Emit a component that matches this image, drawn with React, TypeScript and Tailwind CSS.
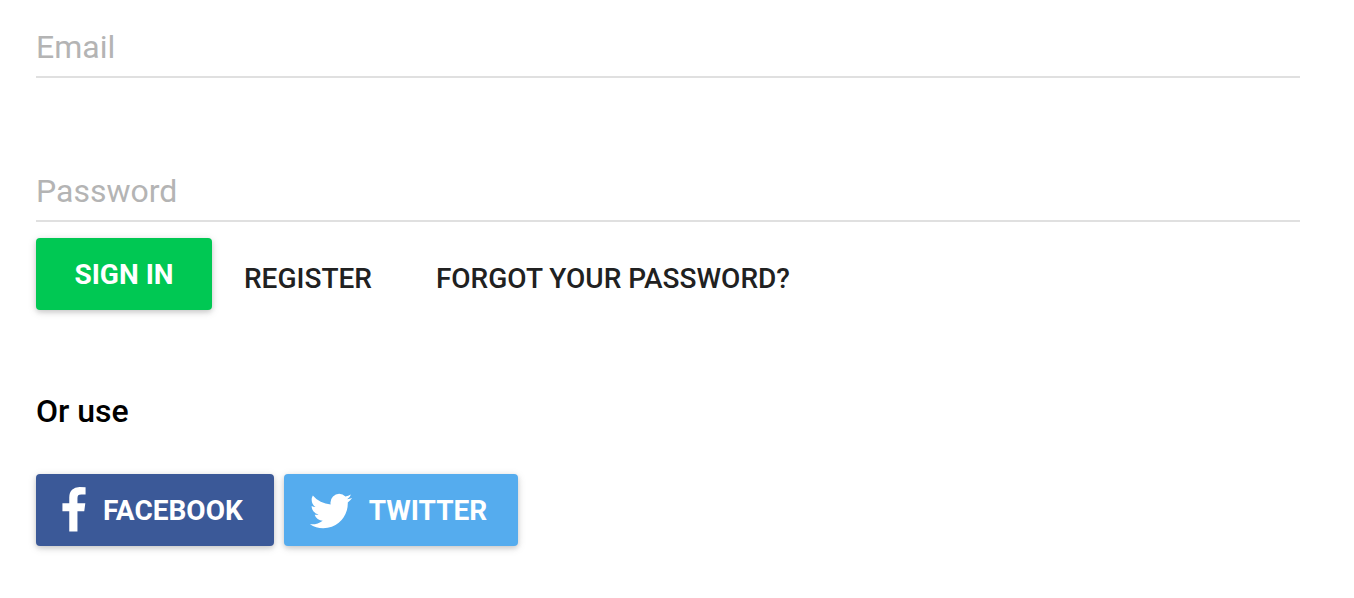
const field =
  "block h-16 w-full border-b-2 border-[#e0e0e0] bg-transparent pt-1 text-[32px] text-[#212121] outline-none placeholder:text-[#b4b4b4]";
const raised =
  "flex h-18 items-center justify-center rounded-[4px] pt-[2px] text-[28px] font-bold text-white uppercase shadow-[0_2px_10px_rgba(0,0,0,0.12),0_2px_5px_rgba(0,0,0,0.14)]";
const social = "gap-[17px] pr-[31px] pl-[26px]";
const flat = "flex h-18 items-center px-8 pt-[2px] text-[28px] font-medium uppercase text-[#212121]";

function FacebookIcon() {
  return (
    <svg viewBox="463 0 896 1792" className="h-12 w-6" fill="currentColor" aria-hidden="true">
      <path d="M1343 12v264h-157q-86 0-116 36t-30 108v189h293l-39 296h-254v759h-306v-759h-255v-296h255v-218q0-186 104-288.500t277-102.500q147 0 228 12z" />
    </svg>
  );
}

function TwitterIcon() {
  return (
    <svg viewBox="112 0 1568 1792" className="h-12 w-[42px] overflow-visible" fill="currentColor" aria-hidden="true">
      <path d="M1684 408q-67 98-162 167 1 14 1 42 0 130-38 259.500t-115.500 248.500-184.500 210.500-258 146-323 54.500q-271 0-496-145 35 4 78 4 225 0 401-138-105-2-188-64.500t-114-159.500q33 5 61 5 43 0 85-11-112-23-185.500-111.500t-73.500-205.500v-4q68 38 146 41-66-44-105-115t-39-154q0-88 44-163 121 149 294.500 238.500t371.500 99.500q-8-38-8-74 0-134 94.500-228.500t228.500-94.500q140 0 236 102 109-21 205-78-37 115-142 178 93-10 186-50z" />
    </svg>
  );
}

export default function App() {
  return (
    <main className="bg-white pt-[14px] pr-[54px] pb-[52px] pl-9 font-[Roboto,sans-serif]">
      <form onSubmit={(e) => e.preventDefault()}>
        <input type="email" aria-label="Email" placeholder="Email" className={field} />
        <input type="password" aria-label="Password" placeholder="Password" className={`${field} mt-20`} />
        <div className="mt-4 flex items-start">
          <button type="submit" className={`${raised} min-w-[176px] bg-[#00c853] px-8`}>Sign in</button>
          <div className="flex pt-1">
            <a href="#register" className={flat}>Register</a>
            <a href="#forgot" className={flat}>Forgot your password?</a>
          </div>
        </div>
      </form>
      <h2 className="mt-[78px] text-[32px] leading-[38px] font-medium text-black">Or use</h2>
      <div className="mt-11 flex gap-[10px]">
        <button type="button" className={`${raised} ${social} bg-[#3b5998]`}>
          <FacebookIcon />
          Facebook
        </button>
        <button type="button" className={`${raised} ${social} bg-[#55acee]`}>
          <TwitterIcon />
          Twitter
        </button>
      </div>
    </main>
  );
}
